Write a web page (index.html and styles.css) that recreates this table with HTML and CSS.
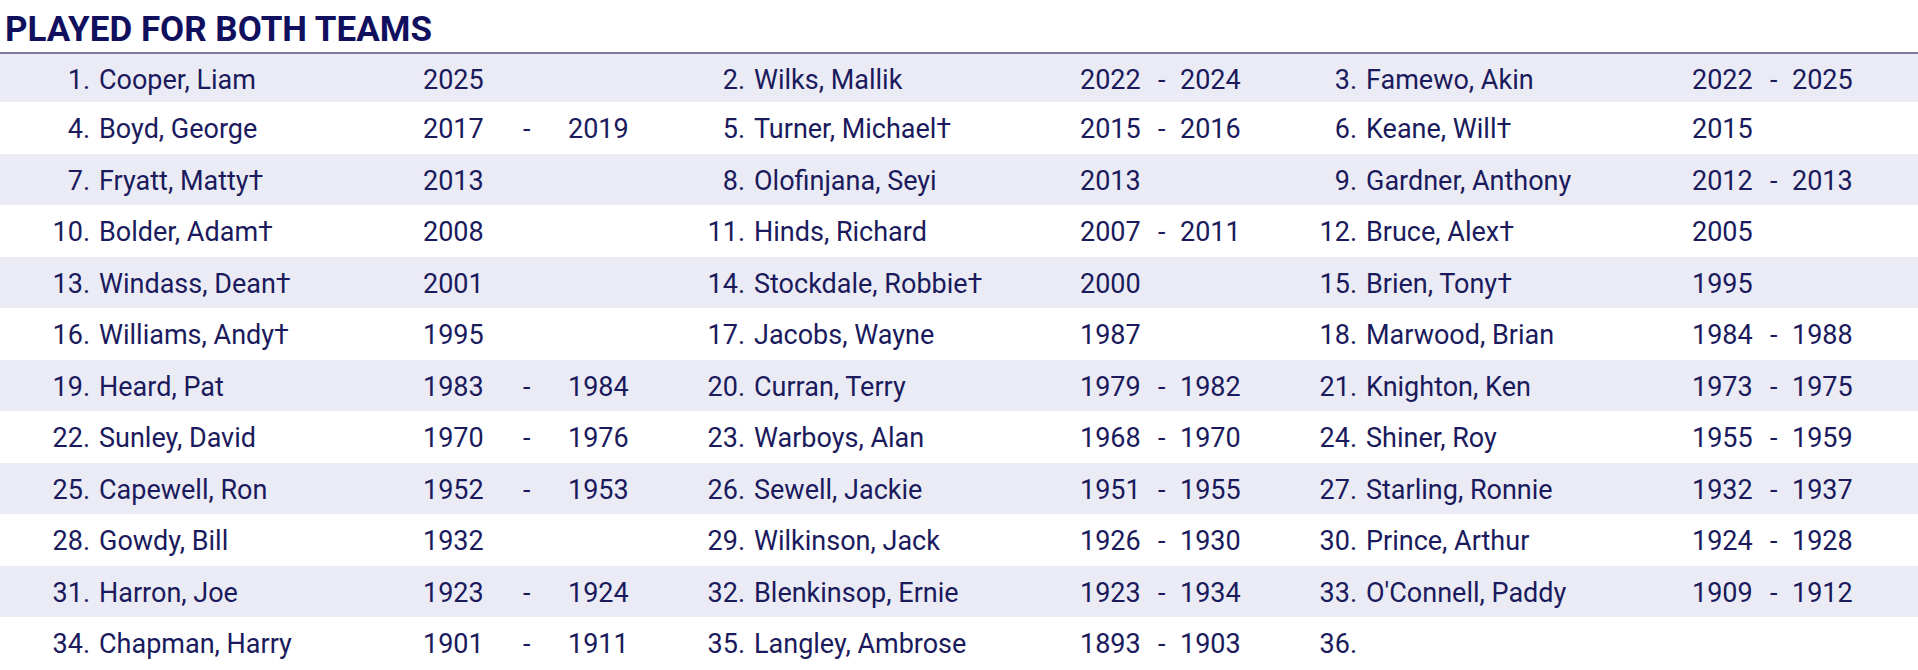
FILE: index.html
```html
<!DOCTYPE html>
<html lang="en">
<head>
<meta charset="utf-8">
<title>Played for both teams</title>
<link rel="stylesheet" href="styles.css">
</head>
<body>
<h1 class="title">PLAYED FOR BOTH TEAMS</h1>
<div class="list">
  <div class="row alt first">
    <span class="num">1.</span><span class="name">Cooper, Liam</span><span>2025</span><span></span><span></span>
    <span class="num">2.</span><span class="name">Wilks, Mallik</span><span>2022</span><span>-</span><span>2024</span>
    <span class="num">3.</span><span class="name">Famewo, Akin</span><span>2022</span><span>-</span><span>2025</span>
  </div>
  <div class="row">
    <span class="num">4.</span><span class="name">Boyd, George</span><span>2017</span><span>-</span><span>2019</span>
    <span class="num">5.</span><span class="name">Turner, Michael†</span><span>2015</span><span>-</span><span>2016</span>
    <span class="num">6.</span><span class="name">Keane, Will†</span><span>2015</span><span></span><span></span>
  </div>
  <div class="row alt">
    <span class="num">7.</span><span class="name">Fryatt, Matty†</span><span>2013</span><span></span><span></span>
    <span class="num">8.</span><span class="name">Olofinjana, Seyi</span><span>2013</span><span></span><span></span>
    <span class="num">9.</span><span class="name">Gardner, Anthony</span><span>2012</span><span>-</span><span>2013</span>
  </div>
  <div class="row">
    <span class="num">10.</span><span class="name">Bolder, Adam†</span><span>2008</span><span></span><span></span>
    <span class="num">11.</span><span class="name">Hinds, Richard</span><span>2007</span><span>-</span><span>2011</span>
    <span class="num">12.</span><span class="name">Bruce, Alex†</span><span>2005</span><span></span><span></span>
  </div>
  <div class="row alt">
    <span class="num">13.</span><span class="name">Windass, Dean†</span><span>2001</span><span></span><span></span>
    <span class="num">14.</span><span class="name">Stockdale, Robbie†</span><span>2000</span><span></span><span></span>
    <span class="num">15.</span><span class="name">Brien, Tony†</span><span>1995</span><span></span><span></span>
  </div>
  <div class="row">
    <span class="num">16.</span><span class="name">Williams, Andy†</span><span>1995</span><span></span><span></span>
    <span class="num">17.</span><span class="name">Jacobs, Wayne</span><span>1987</span><span></span><span></span>
    <span class="num">18.</span><span class="name">Marwood, Brian</span><span>1984</span><span>-</span><span>1988</span>
  </div>
  <div class="row alt">
    <span class="num">19.</span><span class="name">Heard, Pat</span><span>1983</span><span>-</span><span>1984</span>
    <span class="num">20.</span><span class="name">Curran, Terry</span><span>1979</span><span>-</span><span>1982</span>
    <span class="num">21.</span><span class="name">Knighton, Ken</span><span>1973</span><span>-</span><span>1975</span>
  </div>
  <div class="row">
    <span class="num">22.</span><span class="name">Sunley, David</span><span>1970</span><span>-</span><span>1976</span>
    <span class="num">23.</span><span class="name">Warboys, Alan</span><span>1968</span><span>-</span><span>1970</span>
    <span class="num">24.</span><span class="name">Shiner, Roy</span><span>1955</span><span>-</span><span>1959</span>
  </div>
  <div class="row alt">
    <span class="num">25.</span><span class="name">Capewell, Ron</span><span>1952</span><span>-</span><span>1953</span>
    <span class="num">26.</span><span class="name">Sewell, Jackie</span><span>1951</span><span>-</span><span>1955</span>
    <span class="num">27.</span><span class="name">Starling, Ronnie</span><span>1932</span><span>-</span><span>1937</span>
  </div>
  <div class="row">
    <span class="num">28.</span><span class="name">Gowdy, Bill</span><span>1932</span><span></span><span></span>
    <span class="num">29.</span><span class="name">Wilkinson, Jack</span><span>1926</span><span>-</span><span>1930</span>
    <span class="num">30.</span><span class="name">Prince, Arthur</span><span>1924</span><span>-</span><span>1928</span>
  </div>
  <div class="row alt">
    <span class="num">31.</span><span class="name">Harron, Joe</span><span>1923</span><span>-</span><span>1924</span>
    <span class="num">32.</span><span class="name">Blenkinsop, Ernie</span><span>1923</span><span>-</span><span>1934</span>
    <span class="num">33.</span><span class="name">O'Connell, Paddy</span><span>1909</span><span>-</span><span>1912</span>
  </div>
  <div class="row">
    <span class="num">34.</span><span class="name">Chapman, Harry</span><span>1901</span><span>-</span><span>1911</span>
    <span class="num">35.</span><span class="name">Langley, Ambrose</span><span>1893</span><span>-</span><span>1903</span>
    <span class="num">36.</span><span class="name"></span><span></span><span></span><span></span>
  </div>
</div>
</body>
</html>
```
FILE: styles.css
```css
html, body {
  margin: 0;
  padding: 0;
  background: #ffffff;
}

body {
  font-family: Roboto, "Liberation Sans", sans-serif;
  color: #1a1a5c;
}

.title {
  margin: 0;
  padding: 10px 0 2px 5px;
  font-size: 35px;
  line-height: 40px;
  font-weight: 700;
  color: #10105e;
  border-bottom: 2px solid #7c7c9a;
}

.list {
  display: flex;
  flex-direction: column;
}

.row {
  display: grid;
  grid-template-columns:
    90px 333px 100px 45px 99px
    78px 335px 78px 22px 100px
    77px 335px 78px 22px 1fr;
  align-items: center;
  height: 51.5px;
  padding-top: 3px;
  box-sizing: border-box;
  font-size: 27px;
  white-space: nowrap;
}

.row.first {
  height: 48px;
}

.row.alt {
  background: #ebebf5;
}

.num {
  text-align: right;
}

.name {
  padding-left: 9px;
}
```
